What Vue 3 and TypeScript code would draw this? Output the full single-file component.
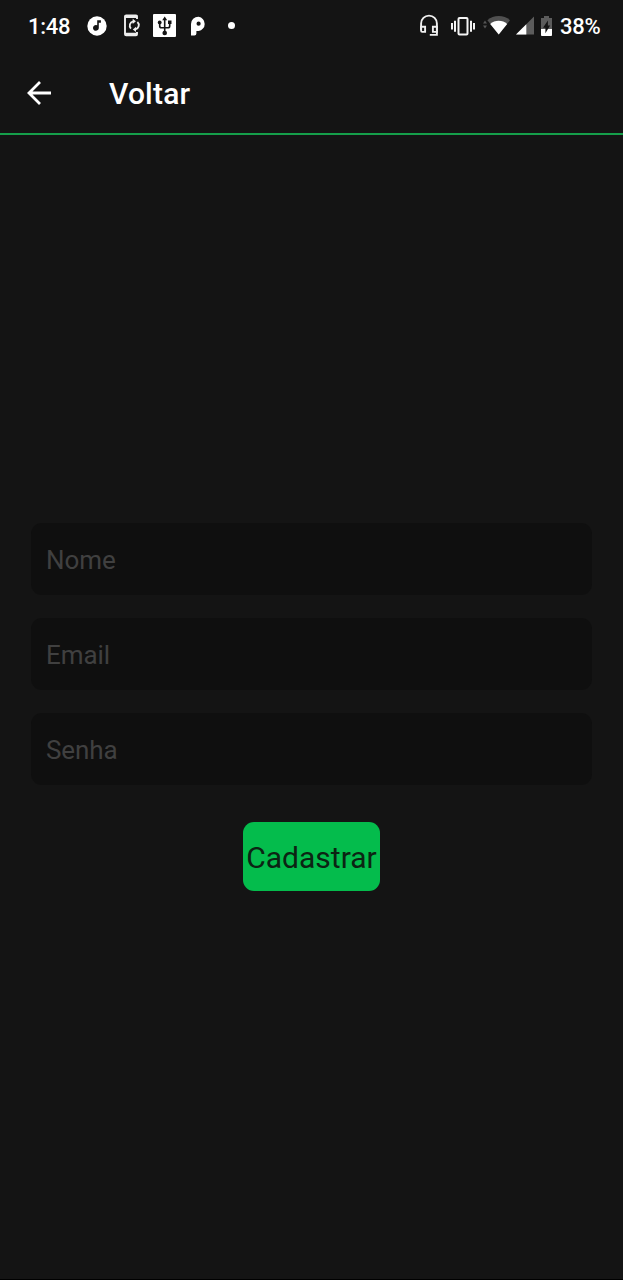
<script setup lang="ts">
import { ref } from 'vue'

interface Field {
  name: string
  type: string
  placeholder: string
}

const fields: Field[] = [
  { name: 'nome', type: 'text', placeholder: 'Nome' },
  { name: 'email', type: 'email', placeholder: 'Email' },
  { name: 'senha', type: 'password', placeholder: 'Senha' },
]
const values = ref<Record<string, string>>({ nome: '', email: '', senha: '' })
</script>

<template>
  <div class="screen">
    <div class="status">
      <div class="group">
        <span class="clock">1:48</span>
        <svg class="music" width="20" height="20" viewBox="0 0 20 20">
          <circle cx="10" cy="10" r="9.7" fill="#fff" />
          <path d="M10.2 4.2h3.7v2.6h-2.1v5.1a2.9 2.9 0 1 1-1.6-2.6z" fill="#141414" />
        </svg>
        <svg class="sync" width="17" height="23" viewBox="0 0 17 23" fill="none" stroke="#eee" stroke-width="1.9">
          <path d="M13 5V2.5Q13 1.5 12 1.5H2.2Q1 1.5 1 2.6v17.6q0 1.2 1.2 1.2H12q1 0 1-1.2V18" />
          <path d="M1 2.6h12M1 20h12" stroke-width="2.6" />
          <path d="M6.9 14.6a4.4 4.4 0 0 1 2.3-7.3M13.4 8a4.3 4.3 0 0 1-2 7.4" stroke-width="1.8" />
          <path d="M8.7 4.7v5.2l3.2-2.6zM12 12.8V18l-3.2-2.6z" fill="#eee" stroke="none" />
        </svg>
        <svg class="usb" width="23" height="23" viewBox="0 0 23 23">
          <rect width="23" height="23" rx="1" fill="#fff" />
          <path d="M11.7 5v14M6.7 9v2.9q0 1.8 1.8 1.8h6.4q1.8 0 1.8-1.8V8" fill="none" stroke="#141414" stroke-width="1.6" />
          <path d="M11.7 2.4l2.5 3.8h-5zM15 6.5h3.5v3.4H15z" fill="#141414" />
          <circle cx="6.7" cy="8.4" r="1.9" fill="#141414" />
          <circle cx="11.7" cy="19" r="2.3" fill="#141414" />
        </svg>
        <svg class="app" width="15" height="20" viewBox="0 0 15 20">
          <path fill-rule="evenodd" d="M0 19.5V8A7.4 7.4 0 0 1 7.4.7h.2a7.3 7.3 0 0 1 0 14.4H5.4v2.4q0 2-2 2zM7.6 5.6a2.1 2.1 0 1 0 0 4.2 2.1 2.1 0 0 0 0-4.2z" fill="#fff" />
        </svg>
        <span class="dot"></span>
      </div>
      <div class="group">
        <svg width="18" height="23" viewBox="0 0 18 23" fill="none" stroke="#f0f0f0" stroke-width="1.9">
          <path d="M1.1 16V9.5a7.9 7.9 0 0 1 15.8 0v11.4H9.8" />
          <path d="M1.1 12.7h4v5.2H2.2q-1.1 0-1.1-1.2zM16.9 12.7h-4v5.2h4z" />
        </svg>
        <svg class="vibrate" width="26" height="20" viewBox="0 0 26 20" fill="none" stroke="#f4f4f4" stroke-width="2">
          <rect x="8.5" y="2" width="9" height="16.5" rx="1" />
          <path d="M2 7v6.5M5 4.7v11M21 4.7v11M24 7v6.5" />
        </svg>
        <svg class="wifi" width="27" height="19" viewBox="0 0 27 19">
          <path d="M2 4.6l2 3H0zM2 12.4l2-3H0z" fill="#555" />
          <path d="M4.4 4.3a17.3 17.3 0 0 1 22.6 0L15.7 18.5z" fill="#505050" />
          <path d="M7.2 7.9a12.8 12.8 0 0 1 17 0l-8.5 10.6z" fill="#fff" />
        </svg>
        <svg class="signal" width="18" height="19" viewBox="0 0 18 19">
          <path d="M18 .5v18H0z" fill="#5c5c5c" />
          <path d="M10.3 8.2v10.3H0z" fill="#fff" />
        </svg>
        <svg class="battery" width="11" height="20" viewBox="0 0 11 20">
          <path d="M3 0h5v2h3v17q0 1-1 1H1q-1 0-1-1V2h3z" fill="#5c5c5c" />
          <path d="M0 13h11v6q0 1-1 1H1q-1 0-1-1z" fill="#fff" />
          <path d="M6.9 4.5v5h2.2l-4.7 7.7v-5.5H2z" fill="#141414" />
        </svg>
        <span class="percent">38%</span>
      </div>
    </div>

    <header class="header">
      <svg width="26" height="26" viewBox="0 0 26 26" fill="none" stroke="#fff" stroke-width="2.8">
        <path d="M25 13H3.5M14 2L3 13l11 11" />
      </svg>
      <h1 class="title">Voltar</h1>
    </header>

    <form class="form" @submit.prevent>
      <input
        v-for="field in fields"
        :key="field.name"
        v-model="values[field.name]"
        class="field"
        :type="field.type"
        :placeholder="field.placeholder"
      />
      <button class="submit" type="submit">Cadastrar</button>
    </form>
  </div>
</template>

<style>
body {
  margin: 0;
  background: #141414;
}
</style>

<style scoped>
.screen {
  box-sizing: border-box;
  display: flex;
  flex-direction: column;
  height: 1280px;
  background: #141414;
  border-bottom: 1px solid #000;
  font-family: Roboto, sans-serif;
  color: #fff;
}
.status {
  display: flex;
  justify-content: space-between;
  height: 51px;
  padding: 0 23px 0 28px;
}
.group {
  display: flex;
  align-items: center;
}
.group svg {
  flex: none;
}
.clock,
.percent {
  font-size: 22px;
  font-weight: 500;
  line-height: 26px;
  padding-top: 2px;
  letter-spacing: -0.3px;
  white-space: nowrap;
}
.clock {
  width: 59px;
}
.sync {
  margin-left: 17px;
}
.usb {
  margin-left: 12px;
}
.app {
  margin-left: 15px;
}
.dot {
  width: 7px;
  height: 7px;
  margin-left: 22px;
  border-radius: 50%;
  background: #fff;
}
.vibrate {
  margin-left: 12px;
}
.wifi {
  margin-left: 7px;
}
.signal {
  margin-left: 6px;
}
.battery {
  margin-left: 7px;
}
.percent {
  width: 40px;
  margin-left: 8px;
}
.header {
  box-sizing: border-box;
  display: flex;
  align-items: center;
  height: 84px;
  padding: 2px 26px 0;
  border-bottom: 2px solid #159f4a;
}
.title {
  margin: 2px 0 0 57px;
  font-size: 30px;
  font-weight: 500;
  line-height: 36px;
  letter-spacing: 0.2px;
}
.form {
  flex: 1;
  display: flex;
  flex-direction: column;
  align-items: center;
  justify-content: center;
  gap: 23px;
  padding: 0 31px;
}
.field {
  box-sizing: border-box;
  width: 100%;
  height: 72px;
  padding: 2px 15px 0;
  border: 0;
  border-radius: 11px;
  outline: 0;
  background: #0f0f0f;
  color: #fff;
  font: 400 26px Roboto, sans-serif;
  letter-spacing: -0.1px;
}
.field::placeholder {
  color: #404040;
  opacity: 1;
}
.submit {
  width: 137px;
  height: 69px;
  margin-top: 14px;
  padding: 2px 0 0;
  border: 0;
  border-radius: 11px;
  background: #04bc4c;
  color: #0c2413;
  font: 400 30px Roboto, sans-serif;
  white-space: nowrap;
}
</style>
